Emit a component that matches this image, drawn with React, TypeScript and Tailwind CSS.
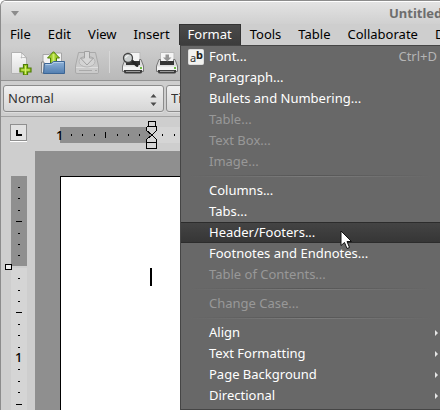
import React from "react";

const topMenus = ["File", "Edit", "View", "Insert", "Format", "Tools", "Table", "Collaborate", "Documents"];

type Entry = {
  label: string;
  disabled?: boolean;
  active?: boolean;
  shortcut?: string;
  submenu?: boolean;
  icon?: boolean;
};

const groups: Entry[][] = [
  [
    { label: "Font...", shortcut: "Ctrl+D", icon: true },
    { label: "Paragraph..." },
    { label: "Bullets and Numbering..." },
    { label: "Table...", disabled: true },
    { label: "Text Box...", disabled: true },
    { label: "Image...", disabled: true },
  ],
  [
    { label: "Columns..." },
    { label: "Tabs..." },
    { label: "Header/Footers...", active: true },
    { label: "Footnotes and Endnotes..." },
    { label: "Table of Contents...", disabled: true },
  ],
  [{ label: "Change Case...", disabled: true }],
  [
    { label: "Align", submenu: true },
    { label: "Text Formatting", submenu: true },
    { label: "Page Background", submenu: true },
    { label: "Directional", submenu: true },
  ],
];

function NewIcon() {
  return (
    <svg width="24" height="24" viewBox="0 0 24 24">
      <defs>
        <linearGradient id="sheet" x1="0" y1="0" x2="0" y2="1">
          <stop offset="0" stopColor="#fafafa" />
          <stop offset="1" stopColor="#dedede" />
        </linearGradient>
      </defs>
      <path d="M2.500 1.500H12.500L17.500 6.500V22.500H2.500Z" fill="url(#sheet)" stroke="#b2b2b2" />
      <path d="M12.500 1.500C13 4 13 5.500 12 7C14 6 16 6.500 17.500 7Z" fill="#fff" stroke="#a8a8a8" strokeWidth=".8" />
      <path d="M14.500 13.500h4v3.500h3.500v4h-3.500v3h-4v-3H11v-4h3.500Z" fill="#9ccb22" stroke="#4f7d08" strokeWidth="1.200" />
      <path d="M16.500 15v8M12.500 19h8" stroke="#d5ef74" strokeWidth="1" />
    </svg>
  );
}

function OpenIcon() {
  return (
    <svg width="26" height="24" viewBox="0 0 26 24">
      <defs>
        <linearGradient id="folder" x1="0" y1="0" x2="0" y2="1">
          <stop offset="0" stopColor="#8fb2d8" />
          <stop offset="1" stopColor="#527eb0" />
        </linearGradient>
      </defs>
      <path d="M2 22V3.500H8L10 2H20.500V22Z" fill="#f3f3f3" stroke="#a5a5a5" />
      <path d="M.5 22V11H3V22Z" fill="#e2e2e2" stroke="#888" />
      <path d="M9.500 14V7H6.500L12.500 .7L18.500 7H15.500V14Z" fill="#9fce2a" stroke="#4f7d08" />
      <path d="M12.500 3v8" stroke="#d0ec70" strokeWidth="2" />
      <path d="M2.500 22.500L3.500 12.500H10L12.500 10.500H23.500V22.500Z" fill="url(#folder)" stroke="#3c6594" />
      <path d="M4.500 13.500H10.500L13 11.500H22.500" fill="none" stroke="#b4cee8" />
    </svg>
  );
}

function SaveIcon() {
  return (
    <svg width="26" height="24" viewBox="0 0 26 24">
      <path d="M3.500 1.500H20.500L23.500 15V21.500Q23.500 22.500 22 22.500H2Q.5 22.500 .5 21V15Z" fill="#cacaca" stroke="#a9a9a9" />
      <path d="M1 16.500H23" stroke="#dedede" />
      <ellipse cx="12" cy="10.500" rx="8" ry="5.500" fill="#d3d3d3" stroke="#b5b5b5" />
      <path d="M9.500 .500H14.500V7H18.500L12 14L5.500 7H9.500Z" fill="#d7d7d7" stroke="#a0a0a0" />
      <path d="M4 19.500H17M20 19.500h2" stroke="#a9a9a9" />
    </svg>
  );
}

function PrinterIcon({ preview }: { preview?: boolean }) {
  return (
    <svg width="22" height="24" viewBox="0 0 22 24">
      <path d="M4.500 1.500H18V13H4.500Z" fill="#f4f4f4" stroke="#bbb" />
      <path d="M3 8.500H4.500V12H17.500V8.500H19L21.500 15V20.500H.5V15Z" fill="#ddd" stroke="#777" />
      <path d="M4 10H18V14H4Z" fill="#343434" />
      <path d="M1 15.500H21V19H1Z" fill="#f4f4f4" />
      <path d="M2 19H20V21Q20 22.500 18 22.500H4Q2 22.500 2 21Z" fill="#3d3d3d" />
      <path d="M4 20.500H18" stroke="#999" />
      <path d="M18 17h2" stroke="#70bd45" strokeWidth="2" />
      {preview ? (
        <>
          <path d="M9 9L15 14.500" stroke="#252525" strokeWidth="3" strokeLinecap="round" />
          <circle cx="6" cy="7" r="4.500" fill="#ccd0d0" stroke="#444" strokeWidth="1.300" />
          <path d="M3.500 7Q4 4.500 6.500 4.500" fill="none" stroke="#fff" />
        </>
      ) : (
        <path d="M9.500 3.500H13V6.500H15.500L11.250 10.500L7 6.500H9.500Z" fill="#959595" />
      )}
    </svg>
  );
}

function StyleSelect({ label, value, width }: { label: string; value: string; width: string }) {
  return (
    <div
      className={`${width} relative h-[27px] shrink-0 rounded-[3px] border border-[#8c8c8c] bg-gradient-to-b from-[#f0f0f0] to-[#d6d6d6] shadow-[0_1px_0_#dedede]`}
    >
      <select
        aria-label={label}
        className="h-full w-full appearance-none bg-transparent pl-1 text-[13px] text-[#333] outline-none"
      >
        <option>{value}</option>
      </select>
      <svg className="pointer-events-none absolute top-2 right-1.5" width="7" height="12" viewBox="0 0 7 12">
        <path d="M.5 3.500L3.500 0L6.500 3.500ZM.5 8.500L3.500 12L6.500 8.500Z" fill="#4c4c4c" />
      </svg>
    </div>
  );
}

function HorizontalRuler() {
  return (
    <svg className="block h-[34px] w-full shrink-0" aria-label="Horizontal ruler">
      <rect x="25" y="10" width="92" height="16" fill="#8f8f8f" />
      <rect x="117" y="10" width="100%" height="16" fill="#d5d5d5" />
      {[36, 47, 59, 82, 93, 104, 127, 139].map((x) => (
        <rect key={x} x={x} y="17" width="1" height="2" fill="#000" />
      ))}
      <rect x="70" y="15" width="1" height="6" fill="#000" />
      <text x="21" y="23" fontSize="13" fontWeight="500" fill="#000">1</text>
      <g stroke="#000" fill="#d5d5d5" shapeRendering="crispEdges">
        <rect x="113.500" y="4.500" width="7" height="5" />
        <path d="M112.500 9.500H121.500V13.500L117 18L121.500 22.500V31.500H111.500V22.500L117 18L111.500 13.500V10.500Z" />
        <path d="M111.500 25.500H121.500" />
      </g>
    </svg>
  );
}

function VerticalRuler() {
  return (
    <svg className="block h-full w-full" aria-label="Vertical ruler">
      <rect x="9" y="25" width="16" height="90" fill="#8f8f8f" />
      <rect x="9" y="117" width="16" height="100%" fill="#d5d5d5" />
      {[36, 47, 59, 82, 93, 104, 127, 139, 150, 173, 184, 196, 218, 230, 241].map((y) => (
        <rect key={y} x="16" y={y} width="2" height="1" fill="#000" />
      ))}
      {[70, 161, 253].map((y) => (
        <rect key={y} x="14" y={y} width="6" height="1" fill="#000" />
      ))}
      <text x="13" y="211" fontSize="13" fontWeight="500" fill="#000">1</text>
      <rect x="3.500" y="113.500" width="6" height="5" fill="#eee" stroke="#000" shapeRendering="crispEdges" />
    </svg>
  );
}

function FormatMenu() {
  return (
    <div
      role="menu"
      aria-label="Format"
      className="absolute top-[44px] right-0 left-[179px] border-y border-l border-[#454545] bg-[#686868] pb-[3px] text-[13px] text-white"
    >
      {groups.map((entries, g) => (
        <React.Fragment key={g}>
          {g > 0 && (
            <div role="separator" className="flex h-2 flex-col justify-center px-2">
              <div className="h-px bg-gradient-to-r from-transparent via-[#565656] to-transparent" />
              <div className="h-px bg-gradient-to-r from-transparent via-[#7c7c7c] to-transparent" />
            </div>
          )}
          {entries.map((e) => (
            <button
              key={e.label}
              role="menuitem"
              disabled={e.disabled}
              className={`flex h-[21px] w-full items-center pr-0.5 text-left leading-[19px] ${
                e.active ? "border-y border-[#2c2c2c] bg-gradient-to-b from-[#444] to-[#363636]" : ""
              } ${e.disabled ? "text-[#989898]" : ""}`}
            >
              <span className="w-7 shrink-0 pl-[7px]">
                {e.icon && (
                  <svg width="16" height="16" viewBox="0 0 16 16">
                    <rect x=".5" y=".5" width="15" height="15" rx="1" fill="#f2f2ef" stroke="#ddd" />
                    <text x="2" y="13" fontSize="11" fill="#333">a</text>
                    <text x="8" y="10" fontSize="11" fontWeight="700" fill="#222">b</text>
                  </svg>
                )}
              </span>
              <span className="flex-1 whitespace-nowrap">{e.label}</span>
              {e.shortcut && <span className="pr-px text-[#b5b5b5]">{e.shortcut}</span>}
              {e.submenu && (
                <svg width="3" height="6" viewBox="0 0 3 6">
                  <path d="M0 0L3 3L0 6Z" fill="#e6e6e6" />
                </svg>
              )}
            </button>
          ))}
        </React.Fragment>
      ))}
    </div>
  );
}

export default function App() {
  return (
    <div className="relative flex h-screen flex-col overflow-hidden rounded-tl-[6px] border-t border-l border-[#8c8c8c] bg-[#cecece] font-['Noto_Sans','Open_Sans',sans-serif] text-[13px] text-black">
      <header className="flex h-[23px] shrink-0 items-center justify-between overflow-hidden border-t border-white bg-gradient-to-b from-[#e3e3e3] to-[#d0d0d0] pt-px pl-2.5">
        <button aria-label="Window menu">
          <svg width="9" height="6" viewBox="0 0 9 6">
            <path d="M0 0H8L4 5Z" fill="#8c8c8c" />
          </svg>
        </button>
        <h1 className="w-[51px] text-[13px] font-bold whitespace-nowrap text-[#6d6d6d]">Untitled*</h1>
      </header>
      <nav className="flex h-[21px] shrink-0 gap-px overflow-hidden pl-px">
        {topMenus.map((m) => (
          <button
            key={m}
            className={`shrink-0 px-2 pb-0.5 leading-[18px] ${
              m === "Format"
                ? "border border-b-0 border-[#333] bg-gradient-to-b from-[#4a4a4a] to-[#3c3c3c] text-white"
                : ""
            }`}
          >
            {m}
          </button>
        ))}
      </nav>
      <div className="flex h-9 shrink-0 items-start gap-2 border-b border-[#939393] bg-gradient-to-b from-[#cecece] to-[#b9b9b9] pt-1.5 pl-2">
        <button aria-label="New"><NewIcon /></button>
        <button aria-label="Open"><OpenIcon /></button>
        <button aria-label="Save" disabled><SaveIcon /></button>
        <span className="h-[22px] w-px bg-[#d8d8d8]" />
        <button aria-label="Print preview" className="ml-1"><PrinterIcon preview /></button>
        <button aria-label="Print" className="ml-1"><PrinterIcon /></button>
      </div>
      <div className="flex h-9 shrink-0 items-center gap-0.5 overflow-hidden border-b border-[#a3a3a3] pl-0.5">
        <StyleSelect label="Style" value="Normal" width="w-[161px]" />
        <StyleSelect label="Font" value="Times New Roman" width="w-[180px]" />
      </div>
      <main className="flex min-h-0 flex-1 pl-px">
        <div className="flex w-[33px] shrink-0 flex-col">
          <div className="flex h-[34px] shrink-0 items-center justify-center pb-[3px]">
            <button
              aria-label="Tab type"
              className="flex h-[17px] w-[17px] items-center justify-center border border-[#8f8f8f] bg-[#e2e2e2] shadow-[0_1px_0_#fff]"
            >
              <span className="h-1.5 w-1.5 border-b-2 border-l-2 border-black" />
            </button>
          </div>
          <div className="min-h-0 flex-1"><VerticalRuler /></div>
        </div>
        <div className="flex min-w-0 flex-1 flex-col">
          <HorizontalRuler />
          <section aria-label="Document" className="min-h-0 flex-1 bg-[#8f8f8f] pt-[25px] pl-[25px]">
            <div className="h-full border-t border-l border-black bg-white pt-[91px] pl-[89px]">
              <div className="h-[18px] w-0.5 bg-black" />
            </div>
          </section>
        </div>
      </main>
      <FormatMenu />
      <svg className="absolute top-[229px] left-[339px]" width="13" height="20" viewBox="0 0 13 20">
        <path d="M1 1V15.500L4.500 12.500L7 18.500L9.500 17.500L7 11.500H11.500Z" fill="#fff" stroke="#111" />
      </svg>
    </div>
  );
}
